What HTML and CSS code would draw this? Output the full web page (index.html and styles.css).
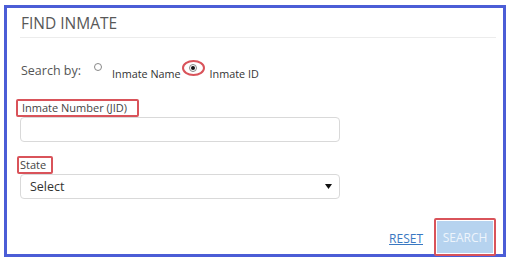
FILE: index.html
```html
<!DOCTYPE html>
<html lang="en">
<head>
    <meta charset="UTF-8">
    <meta name="viewport" content="width=device-width, initial-scale=1.0">
    <title>Find Inmate</title>
    <link rel="stylesheet" href="styles.css">
</head>
<body>
    <div class="panel">
        <h1 class="panel-title">FIND INMATE</h1>

        <div class="search-by">
            <span class="search-label">Search by:</span>
            <span class="radio"></span>
            <span class="radio-text">Inmate Name</span>
            <span class="mark-ring"><span class="radio checked"></span></span>
            <span class="radio-text">Inmate ID</span>
        </div>

        <div class="field first">
            <label class="field-label jid">Inmate Number (JID)</label>
            <div class="text-box"></div>
        </div>

        <div class="field">
            <label class="field-label state">State</label>
            <div class="select-box">
                <span>Select</span>
                <svg width="7" height="5" viewBox="0 0 7 5"><path d="M0 0h7L3.5 5z" fill="#111"/></svg>
            </div>
        </div>

        <div class="actions">
            <a class="reset-link" href="#">RESET</a>
            <div class="search-mark">
                <div class="search-btn">SEARCH</div>
            </div>
        </div>
    </div>
</body>
</html>
```

FILE: styles.css
```css
* {
    margin: 0;
    padding: 0;
    box-sizing: border-box;
}
body {
    background-color: white;
    font-family: "Open Sans", "DejaVu Sans", sans-serif;
    color: #444;
}
.panel {
    margin: 5px 0 0 4px;
    width: 502px;
    height: 252px;
    border: 3px solid #4b5dd6;
    padding: 0 7px 0 13px;
    display: flex;
    flex-direction: column;
}
.panel-title {
    font-size: 15.5px;
    font-weight: 400;
    line-height: 20px;
    color: #585858;
    padding: 5px 0 4px 1px;
    border-bottom: 1px solid #ececec;
}
.search-by {
    display: flex;
    align-items: flex-start;
    margin-top: 25px;
    height: 18px;
}
.search-label {
    font-size: 12.5px;
    line-height: 16px;
    color: #555;
    margin-left: 1px;
}
.radio {
    width: 8px;
    height: 8px;
    border: 1px solid #888;
    border-radius: 50%;
    background: white;
    display: flex;
    align-items: center;
    justify-content: center;
}
.search-by > .radio {
    margin: 0 10px 0 13px;
}
.radio.checked::after {
    content: "";
    width: 4px;
    height: 4px;
    border-radius: 50%;
    background: #111;
}
.radio-text {
    font-size: 10.8px;
    line-height: 14px;
    color: #333;
    margin-top: 4px;
}
.mark-ring {
    width: 23px;
    height: 16px;
    margin: -3px 5px 0 1px;
    border: 2px solid #d9535a;
    border-radius: 50%;
    display: flex;
    justify-content: center;
    padding-top: 2px;
}
.field {
    display: flex;
    flex-direction: column;
    align-items: flex-start;
    margin-top: 14px;
}
.field.first {
    margin-top: 18px;
}
.field-label {
    font-size: 11px;
    line-height: 14px;
    color: #444;
    border: 2px solid #d9535a;
    border-radius: 2px;
}
.field-label.jid {
    margin-left: -4px;
    padding: 0 10px 0 4px;
}
.field-label.state {
    margin-left: -3px;
    padding: 0 5px 0 1px;
}
.text-box,
.select-box {
    width: 320px;
    height: 25px;
    border: 1px solid #d9d9d9;
    border-radius: 4px;
    background: white;
}
.select-box {
    display: flex;
    align-items: center;
    justify-content: space-between;
    padding: 0 7px 0 9px;
    font-size: 12.5px;
    color: #333;
}
.actions {
    margin-top: auto;
    margin-bottom: -2px;
    display: flex;
    justify-content: flex-end;
    align-items: center;
}
.reset-link {
    font-size: 12px;
    color: #3a78c2;
    text-decoration: underline;
    margin-right: 11px;
    margin-top: 2px;
}
.search-mark {
    border: 2px solid #d9535a;
    border-radius: 2px;
    padding: 1px;
}
.search-btn {
    width: 56px;
    height: 32px;
    background-color: #b6d3ef;
    color: #eef5fc;
    font-size: 12px;
    display: flex;
    align-items: center;
    justify-content: center;
}
```
